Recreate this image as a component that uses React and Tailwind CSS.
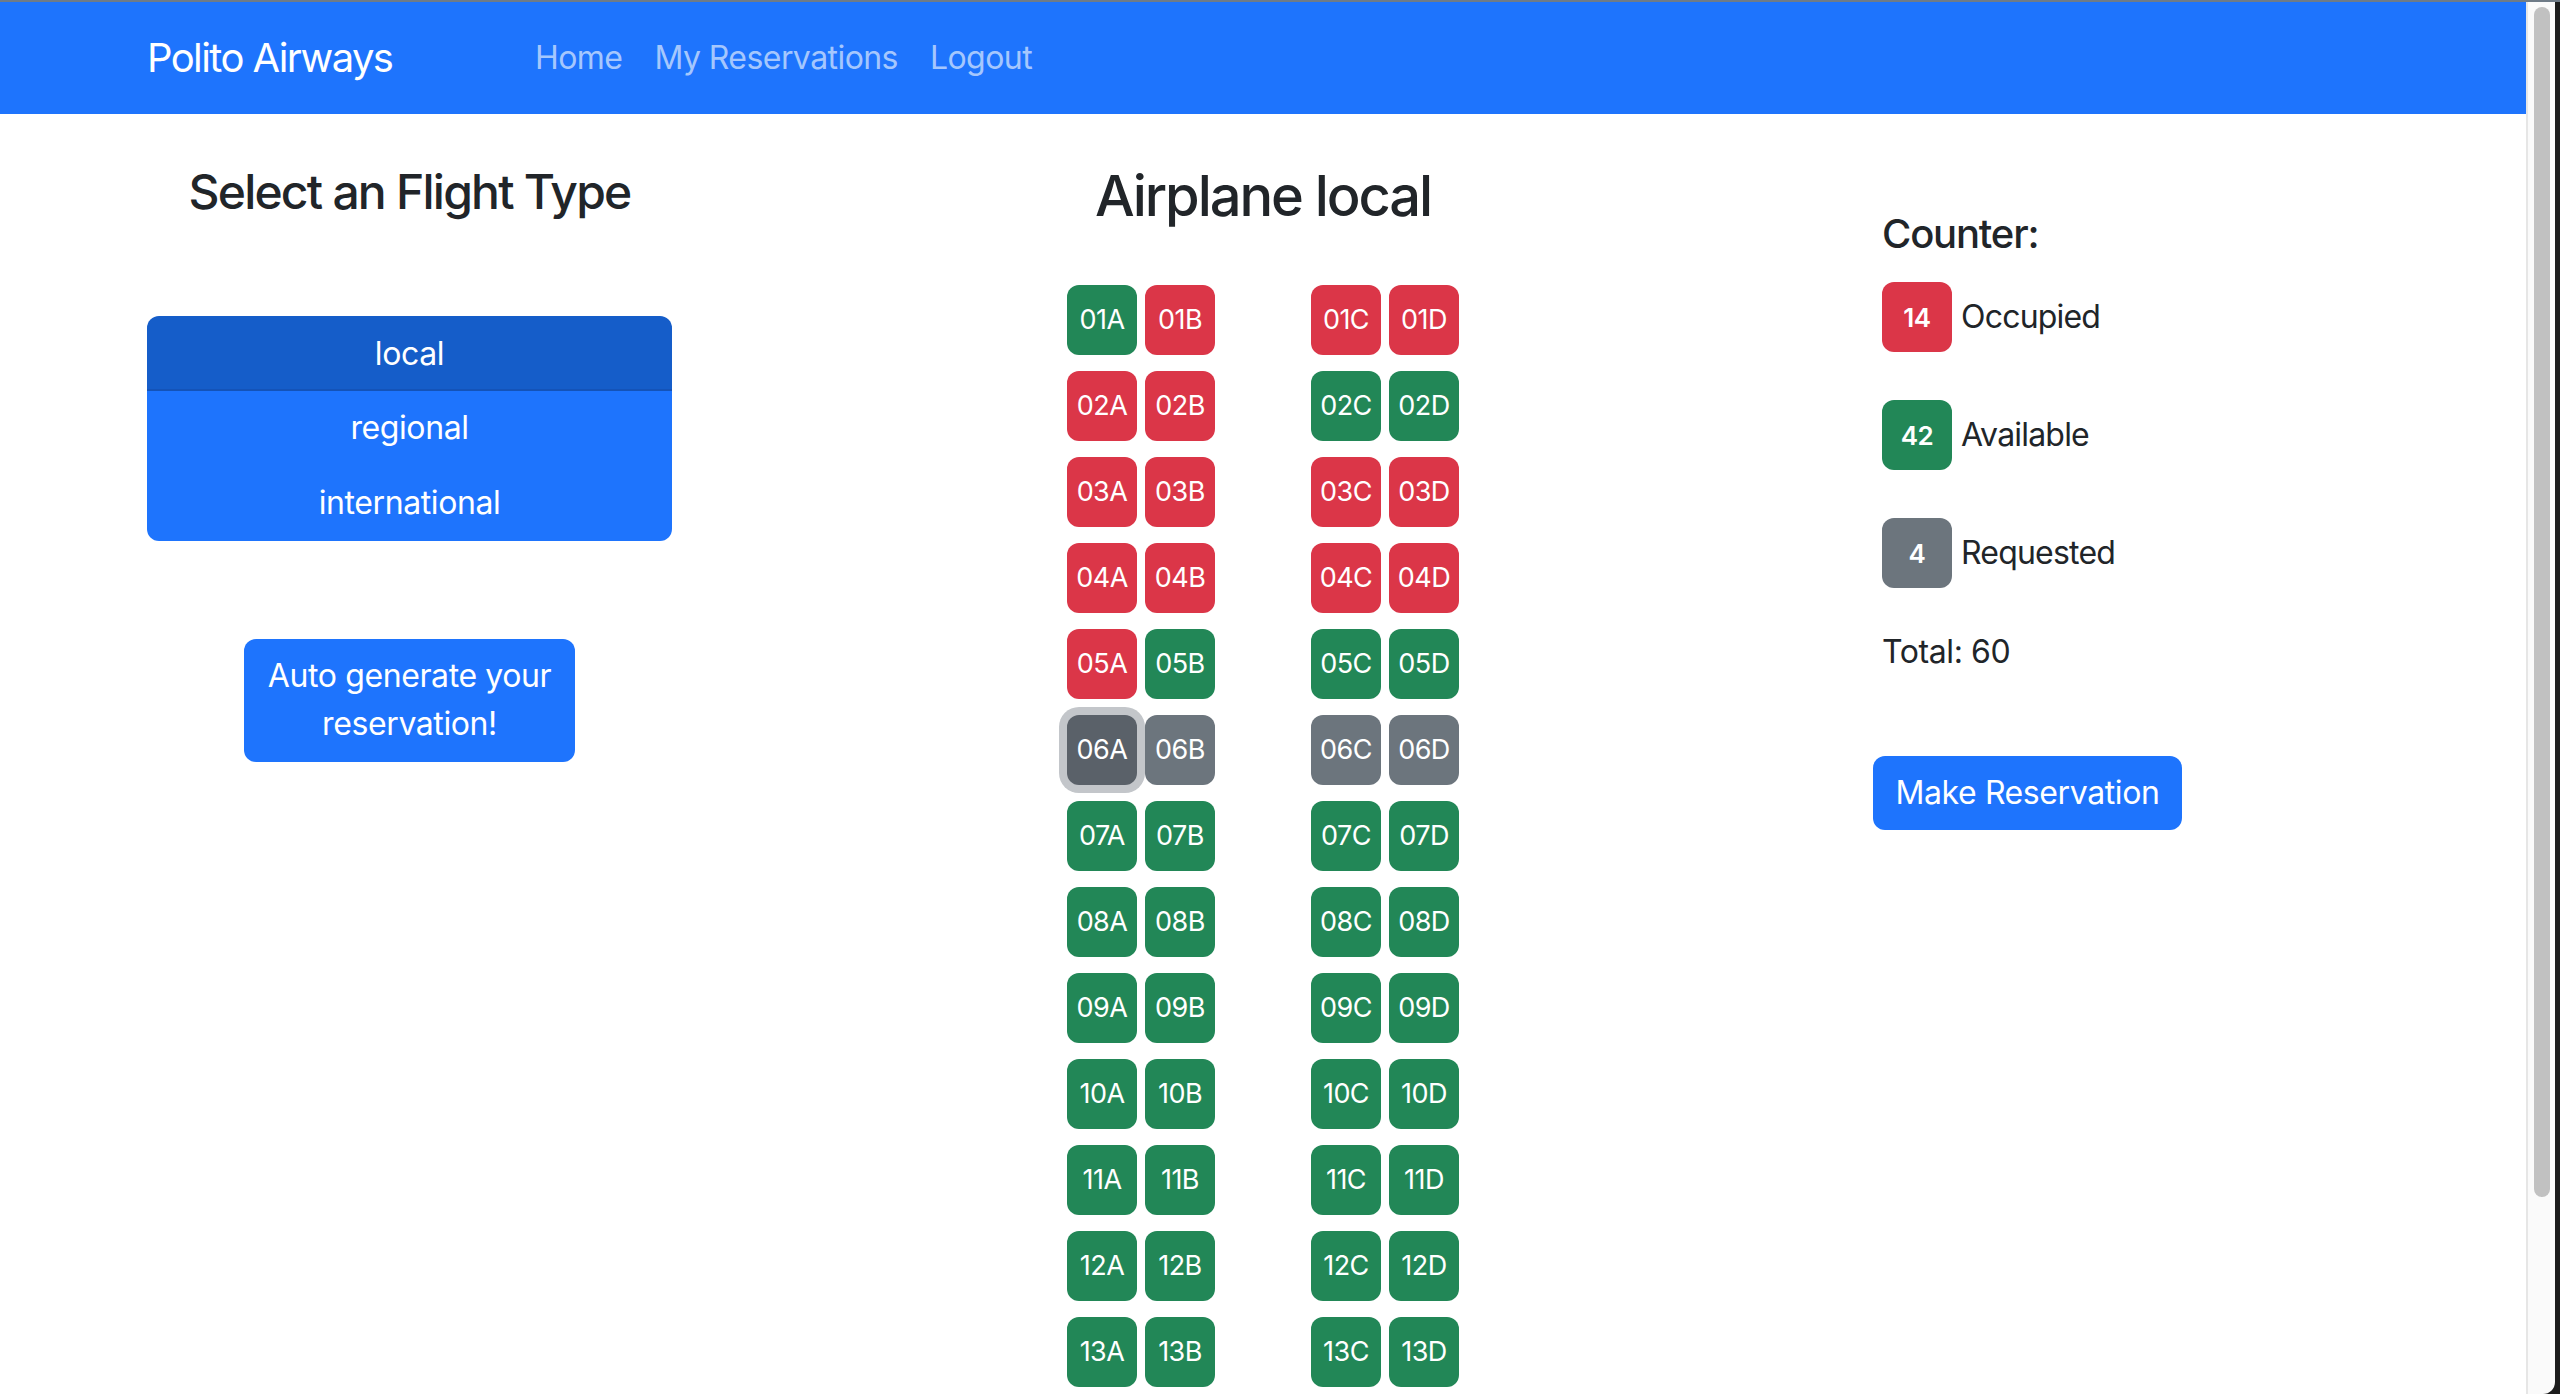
import React from 'react';

const seatRows = [
  ['ok', 'busy', 'busy', 'busy'],
  ['busy', 'busy', 'ok', 'ok'],
  ['busy', 'busy', 'busy', 'busy'],
  ['busy', 'busy', 'busy', 'busy'],
  ['busy', 'ok', 'ok', 'ok'],
  ['picked', 'req', 'req', 'req'],
];
// rows 7-13 are all free (the rest is below the fold)
while (seatRows.length < 13) seatRows.push(['ok', 'ok', 'ok', 'ok']);

const letters = ['A', 'B', 'C', 'D'];

const seatColor = {
  ok: 'bg-[#228757]',
  busy: 'bg-[#db3648]',
  req: 'bg-[#6c757d]',
  picked: 'bg-[#5a6169] ring-8 ring-[#c3c6ca]',
};

const Seat = ({ label, state }) => (
  <button
    type="button"
    className={`flex h-[70px] w-[70px] items-center justify-center rounded-[12px] text-[27px] tracking-[-0.02em] text-white ${seatColor[state]}`}
  >
    {label}
  </button>
);

const CounterRow = ({ count, label, color }) => (
  <div className="flex items-center">
    <span className={`flex h-[70px] w-[70px] items-center justify-center rounded-[12px] text-[26px] font-semibold text-white ${color}`}>
      {count}
    </span>
    <span className="ml-[9px] text-[32px] leading-[48px] tracking-[-0.025em] text-[#212529]">{label}</span>
  </div>
);

export default function App() {
  const flightTypes = ['local', 'regional', 'international'];

  return (
    <div className="flex h-[1394px] w-full flex-col overflow-hidden bg-white font-['Inter',sans-serif] text-[#212529]">
      <div className="h-[2px] w-full shrink-0 bg-[#6f7b87]" />
      <div className="flex min-h-0 flex-1">
        <div className="flex min-w-0 flex-1 flex-col">
          {/* Navbar */}
          <nav className="flex h-[112px] shrink-0 items-center bg-[#1e74fd] pl-[147px] tracking-[-0.035em]">
            <span className="w-[372px] text-[40px] leading-[60px] tracking-[-0.04em] text-white">Polito Airways</span>
            <div className="flex">
              <a className="px-4 text-[32px] leading-[48px] text-[#a5c7fd]">Home</a>
              <a className="px-4 text-[32px] leading-[48px] text-[#a5c7fd]">My Reservations</a>
              <a className="px-4 text-[32px] leading-[48px] text-[#a5c7fd]">Logout</a>
            </div>
          </nav>

          <div className="flex shrink-0 tracking-[-0.025em]">
            {/* Flight type */}
            <div className="w-[842px] pl-[147px] pt-[49px]">
              <div className="flex w-[525px] flex-col items-center">
                <h4 className="text-[48px] font-medium leading-[57.6px] tracking-[-0.037em]">Select an Flight Type</h4>
                <div className="mt-[95px] flex w-full flex-col overflow-hidden rounded-[12px]">
                  {flightTypes.map((t, i) => (
                    <div
                      key={t}
                      className={`flex h-[75px] items-center justify-center text-[32px] text-white ${
                        i === 0 ? 'border-b-2 border-[#1453b8] bg-[#155dc9] pt-[3px]' : 'bg-[#1e74fd]'
                      }`}
                    >
                      {t}
                    </div>
                  ))}
                </div>
                <button
                  type="button"
                  className="mt-[98px] h-[123px] w-[331px] rounded-[12px] bg-[#1e74fd] text-[32px] leading-[48px] text-white"
                >
                  Auto generate your
                  <br />
                  reservation!
                </button>
              </div>
            </div>

            {/* Seats */}
            <div className="flex w-[842px] flex-col items-center pt-[49px]">
              <h3 className="text-[56px] font-medium leading-[67px] tracking-[-0.037em]">Airplane local</h3>
              <div className="mt-[55px] flex flex-col gap-4">
                {seatRows.map((row, r) => {
                  const num = String(r + 1).padStart(2, '0');
                  return (
                    <div key={num} className="flex">
                      <div className="flex gap-2">
                        <Seat label={num + letters[0]} state={row[0]} />
                        <Seat label={num + letters[1]} state={row[1]} />
                      </div>
                      <div className="ml-[96px] flex gap-2">
                        <Seat label={num + letters[2]} state={row[2]} />
                        <Seat label={num + letters[3]} state={row[3]} />
                      </div>
                    </div>
                  );
                })}
              </div>
            </div>

            {/* Counter */}
            <div className="flex w-[842px] flex-col items-start pl-[198px] pt-[96px]">
              <h5 className="text-[40px] font-medium leading-[48px] tracking-[-0.03em]">Counter:</h5>
              <div className="mt-[24px] flex flex-col gap-[48px]">
                <CounterRow count={14} label="Occupied" color="bg-[#db3648]" />
                <CounterRow count={42} label="Available" color="bg-[#228757]" />
                <CounterRow count={4} label="Requested" color="bg-[#6c757d]" />
              </div>
              <p className="mt-[40px] text-[32px] leading-[48px]">Total: 60</p>
              <button
                type="button"
                className="ml-[-9px] mt-[80px] h-[74px] w-[309px] rounded-[12px] bg-[#1e74fd] text-[32px] text-white"
              >
                Make Reservation
              </button>
            </div>
          </div>
        </div>

        {/* scrollbar + window edge */}
        <div className="flex shrink-0 bg-[#1c1c1c]">
          <div className="w-[29px] rounded-br-[12px] border-l-2 border-[#e6e6e6] bg-[#fafafa] pl-[6px] pt-[5px]">
            <div className="h-[1190px] w-[16px] rounded-full bg-[#c1c1c1]" />
          </div>
          <div className="w-[5px]" />
        </div>
      </div>
    </div>
  );
}
